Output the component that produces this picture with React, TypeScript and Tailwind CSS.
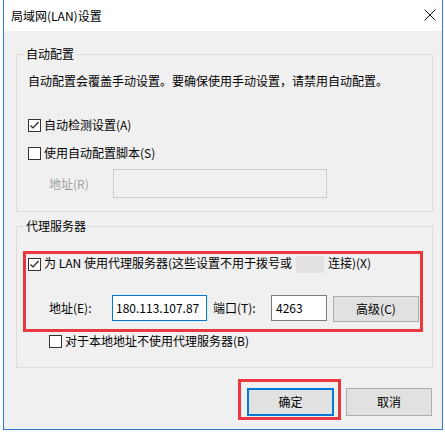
import React from "react"

const font = { fontFamily: '"Noto Sans CJK SC", "Noto Sans", sans-serif' }

interface CheckProps {
    checked?: boolean,
    label: React.ReactNode
}

const Check: React.FC<CheckProps> = ({ checked, label }) => (
    <div className="flex items-center h-[16px]">
        <div className="w-[13px] h-[13px] border border-[#333333] bg-white flex items-center justify-center shrink-0">
            {checked && (
                <svg width="11" height="11" viewBox="0 0 11 11">
                    <path d="M1.5 5.5 L4 8 L9.5 2" fill="none" stroke="#222" strokeWidth="1.2" />
                </svg>
            )}
        </div>
        <span className="ml-[3px] text-[12px] leading-[16px] text-black whitespace-nowrap">{label}</span>
    </div>
)

const App: React.FC = () => {
    return (
        <div className="w-[445px] h-[435px] bg-white overflow-hidden pl-[3px]" style={font}>
            <div className="w-[440px] h-[430px] border-x border-b border-[#2b7bd3] flex flex-col">
                {/* title bar */}
                <div className="h-[31px] bg-white flex items-center justify-between pl-[7px] pr-[6px] shrink-0">
                    <span className="text-[12px] leading-[16px] text-black">局域网(LAN)设置</span>
                    <svg width="12" height="12" viewBox="0 0 12 12" className="mb-[2px]">
                        <path d="M0.5 0.5 L11.5 11.5 M11.5 0.5 L0.5 11.5" stroke="#111" strokeWidth="1" />
                    </svg>
                </div>

                <div className="flex-1 bg-[#f0f0f0] flex flex-col">
                    {/* auto config */}
                    <fieldset className="mt-[15px] ml-[12px] mr-[9px] border border-[#dcdcdc] pb-[13px] pl-[11px]">
                        <legend className="ml-[-4px] px-[2px] text-[12px] leading-[16px] text-black">自动配置</legend>
                        <p className="mt-[11px] text-[12px] leading-[16px] text-black">自动配置会覆盖手动设置。要确保使用手动设置，请禁用自动配置。</p>
                        <div className="mt-[28px]">
                            <Check checked label="自动检测设置(A)" />
                        </div>
                        <div className="mt-[12px]">
                            <Check label="使用自动配置脚本(S)" />
                        </div>
                        <div className="mt-[8px] flex items-center pl-[21px]">
                            <span className="w-[64px] text-[12px] leading-[16px] text-[#a0a0a0]">地址(R)</span>
                            <div className="w-[214px] h-[29px] border border-[#cccccc] bg-[#f0f0f0]" />
                        </div>
                    </fieldset>

                    {/* proxy */}
                    <fieldset className="mt-[6px] ml-[12px] mr-[9px] border border-[#dcdcdc] pb-[18px]">
                        <legend className="ml-[7px] px-[2px] text-[12px] leading-[16px] text-black">代理服务器</legend>
                        <div className="mt-[17px] ml-[6px] w-[400px] border-[3px] border-[#e8383d] pt-[2px] pb-[8px] pl-[2px]">
                            <Check
                                checked
                                label={
                                    <>
                                        为 LAN 使用代理服务器(这些设置不用于拨号或
                                        <span className="inline-block align-middle w-[28px] h-[17px] bg-[#e3e1e1] mx-[4px]" />
                                        连接)(X)
                                    </>
                                }
                            />
                            <div className="mt-[23px] flex items-center pl-[21px] h-[26px]">
                                <span className="w-[63px] text-[12px] leading-[16px] text-black">地址(E):</span>
                                <div className="w-[95px] h-[26px] border border-[#0078d7] bg-white flex items-center pl-[3px] text-[12px] leading-[16px] text-black">180.113.107.87</div>
                                <span className="ml-[6px] w-[58px] text-[12px] leading-[16px] text-black">端口(T):</span>
                                <div className="w-[56px] h-[26px] border border-[#7a7a7a] bg-white flex items-center pl-[4px] text-[12px] leading-[16px] text-black">4263</div>
                                <button className="ml-[6px] w-[86px] h-[26px] mt-[2px] border border-[#adadad] bg-[#e1e1e1] text-[12px] leading-[16px] text-black">高级(C)</button>
                            </div>
                        </div>
                        <div className="mt-[1px] ml-[32px]">
                            <Check label="对于本地地址不使用代理服务器(B)" />
                        </div>
                    </fieldset>

                    {/* buttons */}
                    <div className="mt-[11px] flex items-start justify-end mr-[10px]">
                        <div className="border-[3px] border-[#e8383d] pt-[6px] pl-[6px] pr-[4px] pb-[1px]">
                            <button className="w-[87px] h-[28px] border-2 border-[#0078d7] bg-[#e1e1e1] text-[12px] leading-[16px] text-black">确定</button>
                        </div>
                        <button className="ml-[5px] mt-[9px] w-[86px] h-[28px] border border-[#adadad] bg-[#e1e1e1] text-[12px] leading-[16px] text-black">取消</button>
                    </div>
                </div>
            </div>
            <div className="h-[5px] overflow-hidden pl-[22px]">
                <span className="text-[12px] leading-[16px] text-[#333333]">局域网设置选项(L)</span>
            </div>
        </div>
    )
}

export default App
